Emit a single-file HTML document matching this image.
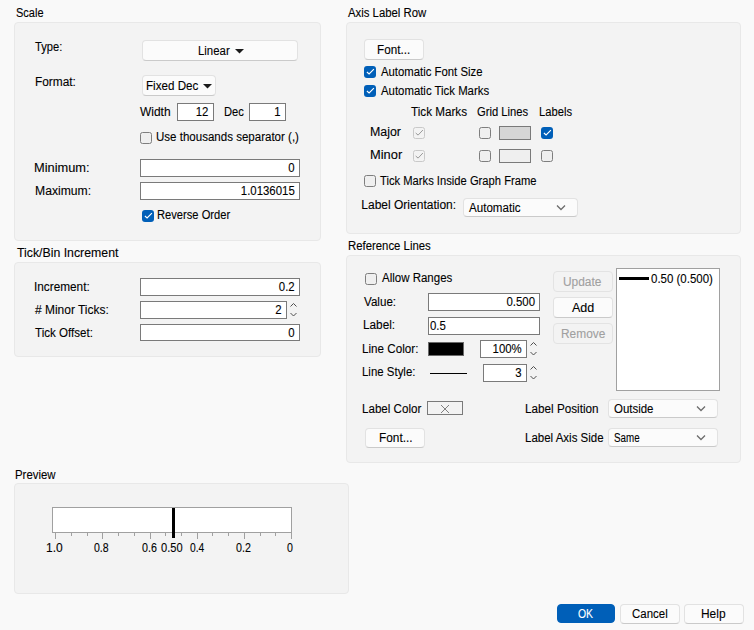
<!DOCTYPE html>
<html><head><meta charset="utf-8">
<style>
html,body{margin:0;padding:0;}
body{width:754px;height:630px;overflow:hidden;background:#f9f9f9;position:relative;
 font-family:"Liberation Sans",sans-serif;font-size:12px;color:#000;-webkit-text-stroke-width:0.1px;}
.a{position:absolute;}
.t{position:absolute;white-space:nowrap;line-height:14px;height:14px;transform:scaleX(0.95);transform-origin:0 0;}
.pn{position:absolute;background:#f3f3f3;border:1px solid #e8e8e8;border-radius:4px;box-sizing:border-box;}
.in{position:absolute;background:#fff;border:1px solid #7a7a7a;box-sizing:border-box;}
.in span{position:absolute;right:4.4px;top:1px;line-height:14px;transform:scaleX(0.95);transform-origin:100% 0;}
.btn{position:absolute;background:#fbfbfb;border:1px solid #e2e2e2;border-bottom-color:#cacaca;border-radius:4px;box-sizing:border-box;text-align:center;}
.dis{background:#f3f3f3;border:1px solid #e3e3e3;color:#a0a0a0;}
.cb{position:absolute;width:12px;height:12px;box-sizing:border-box;border:1px solid #7e7e7e;border-radius:2.5px;background:#efefef;}
.cbc{position:absolute;width:12px;height:12px;box-sizing:border-box;border-radius:3px;background:#005fb8;}
.cbd{position:absolute;width:12px;height:12px;box-sizing:border-box;border:1px solid #c9c9c9;border-radius:2.5px;background:#f3f3f3;}
</style></head><body>

<!-- ============ SCALE ============ -->
<div class="t" style="left:15.80px;top:6px;transform:scaleX(0.917);">Scale</div>
<div class="pn" style="left:14px;top:22px;width:307px;height:219px;"></div>
<div class="t" style="left:35.39px;top:40px;transform:scaleX(0.930);">Type:</div>
<div class="btn" style="left:142px;top:40px;width:156px;height:21px;"></div>
<div class="t" style="left:197.60px;top:44px;transform:scaleX(0.950);">Linear</div>
<svg class="a" style="left:235px;top:49px;" width="9" height="5"><path d="M0 0H9L4.5 4.5Z" fill="#1b1b1b"/></svg>
<div class="t" style="left:34.97px;top:75px;transform:scaleX(0.990);">Format:</div>
<div class="btn" style="left:142px;top:75px;width:74px;height:21px;"></div>
<div class="t" style="left:145.98px;top:79px;transform:scaleX(0.969);">Fixed Dec</div>
<svg class="a" style="left:203px;top:84px;" width="9" height="5"><path d="M0 0H9L4.5 4.5Z" fill="#1b1b1b"/></svg>
<div class="t" style="left:140.20px;top:105px;transform:scaleX(0.996);">Width</div>
<div class="in" style="left:177px;top:103px;width:37px;height:18px;"><span>12</span></div>
<div class="t" style="left:223.82px;top:105px;transform:scaleX(0.930);">Dec</div>
<div class="in" style="left:249px;top:103px;width:37px;height:18px;"><span>1</span></div>
<div class="cb" style="left:140px;top:132px;"></div>
<div class="t" style="left:155.99px;top:130px;transform:scaleX(0.961);">Use thousands separator (,)</div>
<div class="t" style="left:34.28px;top:161px;transform:scaleX(1.069);">Minimum:</div>
<div class="in" style="left:140px;top:159px;width:160px;height:18px;"><span>0</span></div>
<div class="t" style="left:34.54px;top:184px;transform:scaleX(1.013);">Maximum:</div>
<div class="in" style="left:140px;top:182px;width:160px;height:18px;"><span>1.0136015</span></div>
<div class="cbc" style="left:142px;top:210px;"><svg width="12" height="12" style="position:absolute;left:0;top:0"><path d="M2.9 6L5.1 8L9.9 3.2" fill="none" stroke="#fff" stroke-width="1.1"/></svg></div>
<div class="t" style="left:157.02px;top:208px;transform:scaleX(0.930);">Reverse Order</div>

<!-- ============ TICK/BIN ============ -->
<div class="t" style="left:16.60px;top:246px;transform:scaleX(1.025);">Tick/Bin Increment</div>
<div class="pn" style="left:14px;top:262px;width:307px;height:95px;"></div>
<div class="t" style="left:34.17px;top:280px;transform:scaleX(0.983);">Increment:</div>
<div class="in" style="left:140px;top:278px;width:160px;height:18px;"><span>0.2</span></div>
<div class="t" style="left:35.20px;top:303px;transform:scaleX(0.997);">#&nbsp;Minor Ticks:</div>
<div class="in" style="left:140px;top:301px;width:147px;height:18px;"><span>2</span></div>
<svg class="a" style="left:290px;top:302px;" width="8" height="16"><path d="M0.5 4.5L3.5 1.5L6.5 4.5M0.5 11L3.5 14L6.5 11" fill="none" stroke="#505050" stroke-width="1"/></svg>
<div class="t" style="left:35.20px;top:326px;transform:scaleX(0.964);">Tick Offset:</div>
<div class="in" style="left:140px;top:324px;width:160px;height:17px;"><span>0</span></div>

<!-- ============ PREVIEW ============ -->
<div class="t" style="left:15.40px;top:468px;transform:scaleX(0.950);">Preview</div>
<div class="pn" style="left:14px;top:483px;width:335px;height:111px;"></div>
<div class="a" style="left:52px;top:507px;width:240px;height:26px;box-sizing:border-box;border:1px solid #a0a0a0;background:#fff;"></div>
<svg class="a" style="left:0;top:0;" width="754" height="630">
<g stroke="#a0a0a0" stroke-width="1">
<path d="M55.5 532V539"/><path d="M71.5 532V536"/><path d="M87.5 532V536"/><path d="M102.5 532V539"/><path d="M118.5 532V536"/><path d="M134.5 532V536"/><path d="M150.5 532V539"/><path d="M165.5 532V536"/><path d="M181.5 532V536"/><path d="M197.5 532V539"/><path d="M212.5 532V536"/><path d="M228.5 532V536"/><path d="M244.5 532V539"/><path d="M260.5 532V536"/><path d="M275.5 532V536"/><path d="M291.5 532V539"/></g>
<rect x="172" y="508" width="3" height="30" fill="#000"/>
</svg>
<div class="t" style="left:45.74px;top:541px;transform:scaleX(1.001);">1.0</div>
<div class="t" style="left:94.40px;top:541px;transform:scaleX(0.879);">0.8</div>
<div class="t" style="left:142.00px;top:541px;transform:scaleX(0.891);">0.6</div>
<div class="t" style="left:161.01px;top:541px;transform:scaleX(0.924);">0.50</div>
<div class="t" style="left:189.59px;top:541px;transform:scaleX(0.856);">0.4</div>
<div class="t" style="left:235.98px;top:541px;transform:scaleX(0.892);">0.2</div>
<div class="t" style="left:287.39px;top:541px;transform:scaleX(0.887);">0</div>


<!-- ============ AXIS LABEL ROW ============ -->
<div class="t" style="left:347.80px;top:6px;transform:scaleX(0.946);">Axis Label Row</div>
<div class="pn" style="left:346px;top:22px;width:395px;height:212px;"></div>
<div class="btn" style="left:364px;top:39px;width:60px;height:21px;"></div>
<div class="t" style="left:377.48px;top:43px;transform:scaleX(0.974);">Font...</div>
<div class="cbc" style="left:364px;top:66px;"><svg width="12" height="12" style="position:absolute;left:0;top:0"><path d="M2.9 6L5.1 8L9.9 3.2" fill="none" stroke="#fff" stroke-width="1.1"/></svg></div>
<div class="t" style="left:380.60px;top:65px;transform:scaleX(0.945);">Automatic Font Size</div>
<div class="cbc" style="left:364px;top:85px;"><svg width="12" height="12" style="position:absolute;left:0;top:0"><path d="M2.9 6L5.1 8L9.9 3.2" fill="none" stroke="#fff" stroke-width="1.1"/></svg></div>
<div class="t" style="left:380.60px;top:84px;transform:scaleX(0.948);">Automatic Tick Marks</div>
<div class="t" style="left:411.20px;top:105px;transform:scaleX(0.974);">Tick Marks</div>
<div class="t" style="left:477.20px;top:105px;transform:scaleX(0.936);">Grid Lines</div>
<div class="t" style="left:538.61px;top:105px;transform:scaleX(0.933);">Labels</div>
<div class="t" style="left:369.72px;top:125px;transform:scaleX(1.032);">Major</div>
<div class="t" style="left:369.67px;top:148px;transform:scaleX(1.072);">Minor</div>
<div class="cbd" style="left:413px;top:127px;"><svg width="12" height="12" style="position:absolute;left:-1px;top:-1px"><path d="M2.7 6L5.1 8.1L9.9 3" fill="none" stroke="#9a9a9a" stroke-width="1"/></svg></div>
<div class="cbd" style="left:413px;top:150px;"><svg width="12" height="12" style="position:absolute;left:-1px;top:-1px"><path d="M2.7 6L5.1 8.1L9.9 3" fill="none" stroke="#9a9a9a" stroke-width="1"/></svg></div>
<div class="cb" style="left:479px;top:127px;"></div>
<div class="cb" style="left:479px;top:150px;"></div>
<div class="a" style="left:499px;top:126px;width:32px;height:14px;box-sizing:border-box;border:1px solid #7a7a7a;background:#d6d6d6;"></div>
<div class="a" style="left:499px;top:149px;width:32px;height:14px;box-sizing:border-box;border:1px solid #7a7a7a;background:#efefef;"></div>
<div class="cbc" style="left:541px;top:127px;"><svg width="12" height="12" style="position:absolute;left:0;top:0"><path d="M2.9 6L5.1 8L9.9 3.2" fill="none" stroke="#fff" stroke-width="1.1"/></svg></div>
<div class="cb" style="left:541px;top:150px;"></div>
<div class="cb" style="left:364px;top:175px;"></div>
<div class="t" style="left:380.40px;top:174px;transform:scaleX(0.934);">Tick Marks Inside Graph Frame</div>
<div class="t" style="left:361.35px;top:198px;transform:scaleX(1.000);">Label Orientation:</div>
<div class="btn" style="left:463px;top:198px;width:115px;height:19px;"></div>
<div class="t" style="left:468.80px;top:201px;transform:scaleX(0.965);">Automatic</div>
<svg class="a" style="left:556px;top:204px;" width="10" height="7"><path d="M1 1.5L5 5.5L9 1.5" fill="none" stroke="#6c6c6c" stroke-width="1.3"/></svg>

<!-- ============ REFERENCE LINES ============ -->
<div class="t" style="left:347.81px;top:239px;transform:scaleX(0.947);">Reference Lines</div>
<div class="pn" style="left:346px;top:255px;width:395px;height:208px;"></div>
<div class="cb" style="left:365px;top:273px;"></div>
<div class="t" style="left:381.60px;top:271px;transform:scaleX(0.958);">Allow Ranges</div>
<div class="t" style="left:363.60px;top:295px;transform:scaleX(0.968);">Value:</div>
<div class="in" style="left:428px;top:293px;width:112px;height:18px;"><span>0.500</span></div>
<div class="t" style="left:362.57px;top:318px;transform:scaleX(0.982);">Label:</div>
<div class="in" style="left:428px;top:317px;width:112px;height:18px;"><span style="left:1px;right:auto;transform-origin:0 0;">0.5</span></div>
<div class="t" style="left:362.38px;top:342px;transform:scaleX(0.972);">Line Color:</div>
<div class="a" style="left:428px;top:342px;width:36px;height:14px;box-sizing:border-box;border:1px solid #6a6a6a;background:#000;"></div>
<div class="in" style="left:480px;top:340px;width:47px;height:18px;"><span>100%</span></div>
<svg class="a" style="left:530px;top:341px;" width="8" height="16"><path d="M0.5 4.5L3.5 1.5L6.5 4.5M0.5 11L3.5 14L6.5 11" fill="none" stroke="#505050" stroke-width="1"/></svg>
<div class="t" style="left:362.39px;top:365px;transform:scaleX(0.954);">Line Style:</div>
<div class="a" style="left:430px;top:373px;width:37px;height:1px;background:#000;"></div>
<div class="in" style="left:483px;top:364px;width:44px;height:18px;"><span>3</span></div>
<svg class="a" style="left:530px;top:365px;" width="8" height="16"><path d="M0.5 4.5L3.5 1.5L6.5 4.5M0.5 11L3.5 14L6.5 11" fill="none" stroke="#505050" stroke-width="1"/></svg>
<div class="btn dis" style="left:553px;top:271px;width:60px;height:21px;"></div>
<div class="t" style="left:563.16px;top:275px;color:#a0a0a0;transform:scaleX(0.993);">Update</div>
<div class="btn" style="left:553px;top:297px;width:60px;height:21px;"></div>
<div class="t" style="left:571.99px;top:301px;transform:scaleX(1.045);">Add</div>
<div class="btn dis" style="left:553px;top:323px;width:60px;height:21px;"></div>
<div class="t" style="left:560.75px;top:327px;color:#a0a0a0;transform:scaleX(0.992);">Remove</div>
<div class="a" style="left:616px;top:268px;width:104px;height:123px;box-sizing:border-box;border:1px solid #a0a0a0;background:#fff;"></div>
<div class="a" style="left:619px;top:277px;width:30px;height:3px;background:#000;"></div>
<div class="t" style="left:651.20px;top:272px;transform:scaleX(0.956);">0.50 (0.500)</div>
<div class="t" style="left:362.38px;top:402px;transform:scaleX(0.966);">Label Color</div>
<div class="a" style="left:427px;top:401px;width:36px;height:14px;box-sizing:border-box;border:1px solid #7a7a7a;background:#f3f3f3;"></div>
<svg class="a" style="left:440px;top:403.5px;" width="10" height="10"><path d="M1 1L9 9M9 1L1 9" stroke="#808080" stroke-width="1"/></svg>
<div class="btn" style="left:365px;top:428px;width:60px;height:20px;"></div>
<div class="t" style="left:378.76px;top:431px;transform:scaleX(0.987);">Font...</div>
<div class="t" style="left:525.18px;top:402px;transform:scaleX(0.975);">Label Position</div>
<div class="btn" style="left:608px;top:399px;width:110px;height:19px;"></div>
<div class="t" style="left:613.60px;top:402px;transform:scaleX(0.955);">Outside</div>
<svg class="a" style="left:696px;top:405px;" width="10" height="7"><path d="M1 1.5L5 5.5L9 1.5" fill="none" stroke="#6c6c6c" stroke-width="1.3"/></svg>
<div class="t" style="left:525.19px;top:431px;transform:scaleX(0.958);">Label Axis Side</div>
<div class="btn" style="left:608px;top:428px;width:110px;height:19px;"></div>
<div class="t" style="left:613.80px;top:431px;transform:scaleX(0.817);">Same</div>
<svg class="a" style="left:696px;top:434px;" width="10" height="7"><path d="M1 1.5L5 5.5L9 1.5" fill="none" stroke="#6c6c6c" stroke-width="1.3"/></svg>


<!-- ============ BOTTOM BUTTONS ============ -->
<div class="btn" style="left:557px;top:604px;width:58px;height:19px;background:#005fb8;border-color:#005fb8;"></div>
<div class="t" style="left:578.02px;top:607px;color:#fff;transform:scaleX(0.868);">OK</div>
<div class="btn" style="left:620px;top:604px;width:60px;height:20px;"></div>
<div class="t" style="left:632.01px;top:607px;transform:scaleX(0.955);">Cancel</div>
<div class="btn" style="left:684px;top:604px;width:60px;height:20px;"></div>
<div class="t" style="left:701.17px;top:607px;transform:scaleX(0.995);">Help</div>
</body></html>
